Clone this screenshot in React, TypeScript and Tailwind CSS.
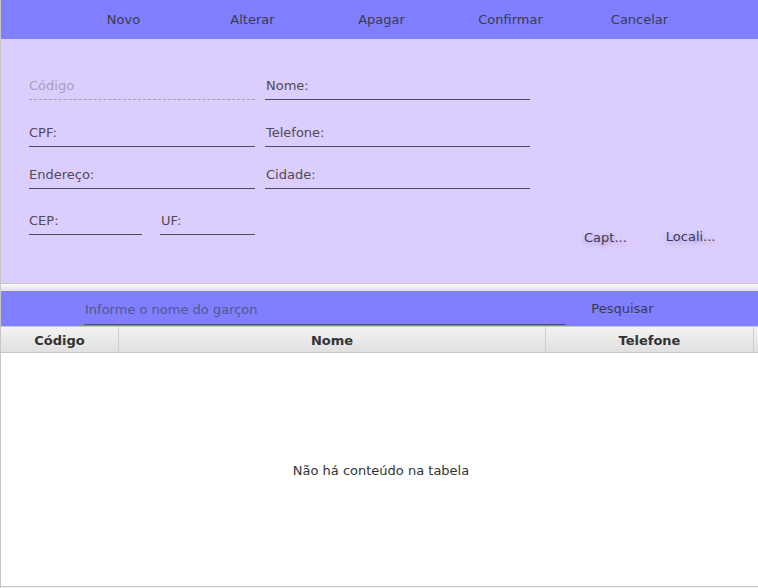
const BOTOES = ['Novo', 'Alterar', 'Apagar', 'Confirmar', 'Cancelar'];

function Campo({ label, largura, dashed, recuo }: { label: string; largura: string; dashed?: boolean; recuo?: boolean }) {
  return (
    <div className={`${largura} h-[25px] flex items-end pb-[6px] border-b ${recuo ? 'pl-[1px]' : ''} ${dashed ? 'border-dashed border-[#a49bb6]' : 'border-[#4d4a52]'}`}>
      <span className={`leading-[15px] ${dashed ? 'text-[#a69fb9]' : 'text-[#4f4a55]'}`}>{label}</span>
    </div>
  );
}

export default function App() {
  return (
    <div className="w-[758px] h-[588px] flex flex-col border-l border-[#c6c6c6] bg-[#f2f2f2] text-[13px] text-[#333] font-['DejaVu_Sans',sans-serif]">
      {/* barra de ações */}
      <div className="h-[39px] shrink-0 bg-[#7f7fff] flex items-center pl-[58px]">
        {BOTOES.map(b => (
          <button key={b} className="w-[129px] text-center leading-[15px] text-[#3d3a48]">{b}</button>
        ))}
      </div>

      {/* formulário */}
      <div className="h-[244px] shrink-0 bg-[#dccdff] pl-[28px] pt-[36px]">
        <div className="flex gap-[10px]">
          <Campo label="Código" largura="w-[226px]" dashed />
          <Campo label="Nome:" largura="w-[265px]" recuo />
        </div>
        <div className="flex gap-[10px] mt-[22px]">
          <Campo label="CPF:" largura="w-[226px]" />
          <Campo label="Telefone:" largura="w-[265px]" recuo />
        </div>
        <div className="flex gap-[10px] mt-[17px]">
          <Campo label="Endereço:" largura="w-[226px]" />
          <Campo label="Cidade:" largura="w-[265px]" recuo />
        </div>
        <div className="flex items-start mt-[21px]">
          <Campo label="CEP:" largura="w-[113px]" />
          <div className="ml-[18px]">
            <Campo label="UF:" largura="w-[95px]" recuo />
          </div>
          <button className="ml-[329px] mt-[20px] leading-[15px] text-[#3f3b4f] [text-shadow:0_2px_5px_rgba(60,40,120,0.35)]">Capt...</button>
          <button className="ml-[39px] mt-[19px] leading-[15px] text-[#3f3b4f] [text-shadow:0_2px_5px_rgba(60,40,120,0.35)]">Locali...</button>
        </div>
      </div>

      {/* divisor */}
      <div className="h-[8px] shrink-0 border-t border-[#c8c8c8] bg-gradient-to-b from-[#fbfbfb] to-[#e2e2e2]" />

      {/* pesquisa */}
      <div className="h-[35px] shrink-0 bg-[#7f7fff] flex items-center">
        <div className="ml-[83px] w-[482px] h-[33px] flex items-end pb-[7px] border-b border-[#4a4a96]">
          <span className="leading-[15px] pl-[1px] text-[#55558e]">Informe o nome do garçon</span>
        </div>
        <button className="ml-[25px] w-[63px] text-center leading-[15px] text-[#3d3a48]">Pesquisar</button>
      </div>

      {/* tabela */}
      <div className="flex-1 flex flex-col bg-white border-b border-[#c4c4c4]">
        <div className="h-[27px] shrink-0 flex border-y border-[#c8c8c8] bg-gradient-to-b from-[#f3f3f3] to-[#e0e0e0] font-bold text-[#333]">
          <div className="w-[118px] flex items-center justify-center pt-[2px] border-r border-[#cfcfcf]">Código</div>
          <div className="w-[427px] flex items-center justify-center pt-[2px] border-r border-[#cfcfcf]">Nome</div>
          <div className="w-[208px] flex items-center justify-center pt-[2px] border-r border-[#cfcfcf]">Telefone</div>
          <div className="flex-1" />
        </div>
        <div className="flex-1 flex items-center justify-center pt-[2px] pl-[3px] text-[#333]">
          Não há conteúdo na tabela
        </div>
      </div>
      <div className="h-[1px] shrink-0" />
    </div>
  );
}
